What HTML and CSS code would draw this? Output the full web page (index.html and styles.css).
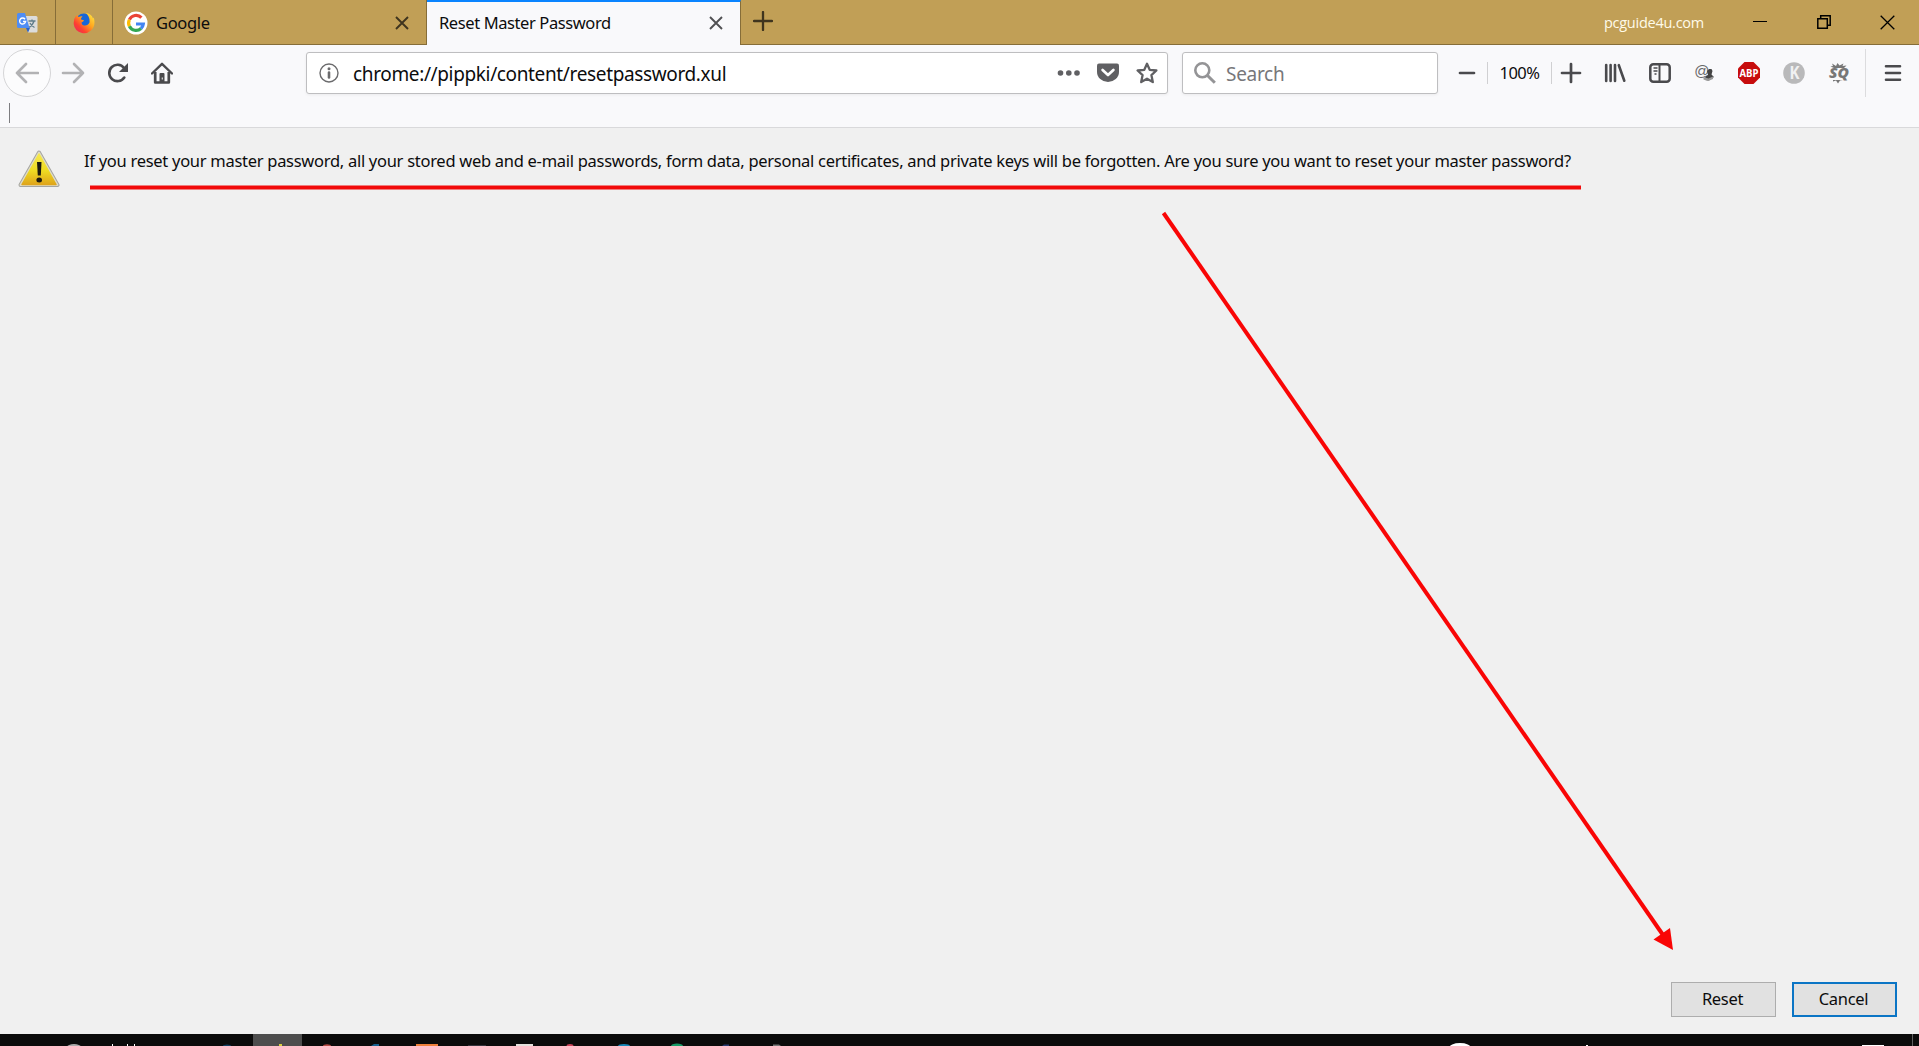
FILE: index.html
```html
<!DOCTYPE html>
<html lang="en">
<head>
<meta charset="utf-8">
<title>Reset Master Password</title>
<link rel="stylesheet" href="styles.css">
</head>
<body>
<div class="window">
  <header class="titlebar">
    <div class="tab pinned">
      <svg width="22" height="22" viewBox="0 0 22 22">
        <path d="M8 4h12q1.500 0 1.500 1.500v13.500q0 1.500-1.500 1.500h-8z" fill="#dcdcdc"/>
        <path d="M12.500 9h7M16 7.500V9m2 0q-1 4-5 6.500M14 11q1.500 3 4.500 4.500" stroke="#607d8b" stroke-width="1.300" fill="none"/>
        <path d="M2.500 1H9l4.500 15H2.500Q1 16 1 14.500v-12Q1 1 2.500 1z" fill="#4f8df5"/>
        <path d="M10 16h4l-2 4.500z" fill="#2a62c9"/>
        <path d="M9 7.200A3 3 0 1 0 9.600 9.500H7" stroke="#fff" stroke-width="1.400" fill="none"/>
      </svg>
    </div>
    <div class="tab pinned">
      <svg width="22" height="22" viewBox="0 0 22 22">
        <defs><linearGradient id="fox" x1="1" y1="0" x2="0" y2="1"><stop offset="0" stop-color="#fff04a"/><stop offset=".4" stop-color="#ffa51e"/><stop offset=".7" stop-color="#ff4030"/><stop offset="1" stop-color="#e8206a"/></linearGradient></defs>
        <circle cx="11" cy="10" r="8.500" fill="#1766d8"/>
        <path d="M2.500 4.500L4 3l1.500 2Q8 4 9.500 4.500 7.500 6 8 7.500l3 .7q-.3 1.600-2.500 2.300Q9 14 12 13.500q3 0 4.500-3Q17 4 12.500 1q6 .5 7.500 5.500l.8-1Q23 14 18 18.500 14 22 9 21 1.500 19 .7 12 .5 7 2.500 4.500z" fill="url(#fox)"/>
      </svg>
    </div>
    <div class="tab google">
      <svg width="24" height="24" viewBox="0 0 24 24">
        <circle cx="12" cy="12" r="11.500" fill="#fff"/>
        <g fill="none" stroke-width="3.200">
          <path d="M17.400 6.600A7.400 7.400 0 0 0 5.400 8.700" stroke="#ea4335"/>
          <path d="M5.400 8.700a7.400 7.400 0 0 0 0 6.600" stroke="#fbbc05"/>
          <path d="M5.400 15.300a7.400 7.400 0 0 0 11.600 2.200" stroke="#34a853"/>
          <path d="M17 17.500a7.400 7.400 0 0 0 2.300-4.500H12" stroke="#4285f4"/>
        </g>
      </svg>
      <span class="tab-label label-google">Google</span>
      <svg class="close" width="14" height="14" viewBox="0 0 14 14"><path d="M1 1l12 12M13 1L1 13" stroke="#3f341e" stroke-width="1.900"/></svg>
    </div>
    <div class="tab active">
      <span class="tab-label label-reset">Reset Master Password</span>
      <svg class="close" width="14" height="14" viewBox="0 0 14 14"><path d="M1 1l12 12M13 1L1 13" stroke="#505052" stroke-width="1.900"/></svg>
    </div>
    <div class="newtab"><svg width="20" height="20" viewBox="0 0 20 20"><path d="M10 1v18M1 10h18" stroke="#3f341e" stroke-width="2.300" stroke-linecap="round"/></svg></div>
    <span class="site">pcguide4u.com</span>
    <div class="controls">
      <svg width="14" height="14" viewBox="0 0 14 14"><path d="M0 6.500h14" stroke="#000"/></svg>
      <svg width="14" height="14" viewBox="0 0 14 14"><path d="M.8 3.700h9.500v9.500H.8zM3.700 3.500V.8h9.500v9.500h-2.700" fill="none" stroke="#000" stroke-width="1.500"/></svg>
      <svg width="15" height="15" viewBox="0 0 15 15"><path d="M.7.700l13.600 13.600M14.300.700L.7 14.300" stroke="#000" stroke-width="1.300"/></svg>
    </div>
  </header>

  <nav class="toolbar">
    <div class="back"><svg width="24" height="22" viewBox="0 0 24 22"><path d="M11 2L2 11l9 9M2 11h21" class="arrow"/></svg></div>
    <div class="btn"><svg width="24" height="22" viewBox="0 0 24 22"><path d="M13 2l9 9-9 9M22 11H2" class="arrow"/></svg></div>
    <div class="btn"><svg width="22" height="22" viewBox="0 0 22 22"><path d="M17.300 15.500A8.200 8.200 0 1 1 17 6" fill="none" stroke="#4a4a4d" stroke-width="2.600" stroke-linecap="round"/><path d="M21 1v8.500q0 .5-.5.500H12z" fill="#4a4a4d"/></svg></div>
    <div class="btn"><svg width="22" height="22" viewBox="0 0 22 22"><path d="M1 11.500L11 1.800l10 9.700" fill="none" stroke="#4a4a4d" stroke-width="2.400" stroke-linecap="round" stroke-linejoin="round"/><path d="M4.200 10v10.500h13.600V10" fill="none" stroke="#4a4a4d" stroke-width="2.700" stroke-linejoin="round"/><path d="M8.500 21v-9q0-1 1-1h3q1 0 1 1v9z" fill="#4a4a4d"/><path d="M11.300 15.500v2" stroke="#ddd" stroke-width="1.200"/></svg></div>

    <div class="field url">
      <svg width="20" height="20" viewBox="0 0 20 20"><circle cx="10" cy="10" r="9" fill="none" stroke="#6b6b6d" stroke-width="1.400"/><circle cx="10" cy="5.800" r="1.500" fill="#6b6b6d"/><path d="M10 9.600v4.800" stroke="#6b6b6d" stroke-width="2.600" stroke-linecap="round"/></svg>
      <span class="url-text">chrome://pippki/content/resetpassword.xul</span>
      <div class="url-actions">
        <svg width="24" height="22" viewBox="0 0 24 22" fill="#606063"><circle cx="4.500" cy="11" r="2.800"/><circle cx="12.800" cy="11" r="2.800"/><circle cx="21" cy="11" r="2.800"/></svg>
        <svg width="22" height="22" viewBox="0 0 22 22"><path d="M2 1.500h18q2 0 2 2V10a11 10 0 0 1-22 0V3.500q0-2 2-2z" fill="#606063"/><path d="M5.600 8l5.400 5 5.400-5" fill="none" stroke="#fff" stroke-width="2.700" stroke-linecap="round" stroke-linejoin="round"/></svg>
        <svg width="22" height="22" viewBox="0 0 22 22"><path d="M11 1.800l2.700 6 6.700.7-5 4.600 1.400 7L11 16.700 5.200 20.100l1.400-7-5-4.600 6.700-.7z" fill="none" stroke="#606063" stroke-width="2.300" stroke-linejoin="round"/></svg>
      </div>
    </div>

    <div class="field search">
      <svg width="24" height="24" viewBox="0 0 24 24"><circle cx="9.300" cy="9.300" r="7" fill="none" stroke="#949496" stroke-width="2.600"/><path d="M14.500 14.500l7.300 7.300" stroke="#949496" stroke-width="3"/></svg>
      <span class="search-text">Search</span>
    </div>

    <div class="zoom-minus"><svg width="18" height="22" viewBox="0 0 18 22"><path d="M2 11h14" stroke="#4a4a4d" stroke-width="2.700" stroke-linecap="round"/></svg></div>
    <div class="zoom-level"><span>100%</span></div>
    <div class="zoom-plus"><svg width="22" height="22" viewBox="0 0 22 22"><path d="M11 2v18M2 11h18" stroke="#4a4a4d" stroke-width="2.700" stroke-linecap="round"/></svg></div>
    <div class="extras">
      <svg width="22" height="22" viewBox="0 0 22 22"><path d="M2.200 3v16M6.600 3v16M11 3v16M14.800 3.200l5.500 15.500" fill="none" stroke="#4a4a4d" stroke-width="2.600" stroke-linecap="round"/></svg>
      <svg width="22" height="22" viewBox="0 0 22 22"><rect x="1.300" y="2.300" width="19.400" height="17.400" rx="3" fill="none" stroke="#4a4a4d" stroke-width="2.500"/><path d="M10.500 3v16" stroke="#4a4a4d" stroke-width="2"/><path d="M4.500 6h4M4.500 9h4M5.500 12h2" stroke="#4a4a4d" stroke-width="1.400"/></svg>
      <svg width="22" height="22" viewBox="0 0 22 22"><text x="0" y="14" font-size="15" class="at">@</text><path d="M11 16l1.500-2.500 1.500-.5-1-4 2-2h2.500l1 2-1 3.500 2.500 2.500-5 3.500-4-.5z" fill="#444"/><path d="M9.500 15l5 1.500L19 14.500v2.500l-5 2-4.500-1.500z" fill="#999"/></svg>
      <svg width="22" height="22" viewBox="0 0 22 22"><path d="M6.500 0h9L22 6.500v9L15.500 22h-9L0 15.500v-9z" fill="#c70d0d"/><text x="11" y="14.900" text-anchor="middle" font-size="11" textLength="19" lengthAdjust="spacingAndGlyphs" class="abp">ABP</text></svg>
      <svg width="22" height="22" viewBox="0 0 22 22"><circle cx="11" cy="11" r="10.800" fill="#b9b9ba"/><text x="11.500" y="17" text-anchor="middle" font-size="17" textLength="10" lengthAdjust="spacingAndGlyphs" class="kay">K</text></svg>
      <svg width="22" height="22" viewBox="0 0 22 22"><path d="M4 1.500l4 2.500 1.500-3 2 2.500L15.500 1.500l-1 2.500 4-.5-2.500 2.500H6L2.500 4.500 5 4z M5 18h10l-3 .5-2 3-2-3-3 1z" fill="#777"/><text x="11" y="16.200" text-anchor="middle" font-size="14.500" textLength="20" lengthAdjust="spacingAndGlyphs" class="sq">SQ</text></svg>
    </div>
    <div class="menu"><svg width="18" height="18" viewBox="0 0 18 18"><path d="M2 2.300h14M2 9h14M2 15.700h14" stroke="#4a4a4d" stroke-width="2.600" stroke-linecap="round"/></svg></div>
  </nav>
  <div class="bookmarks"><i class="divider"></i></div>

  <main class="dialog">
    <div class="message">
      <svg width="42" height="38" viewBox="0 0 42 38">
        <defs><linearGradient id="warn" x1="0" y1="0" x2="0" y2="1"><stop offset="0" stop-color="#f7e94e"/><stop offset=".55" stop-color="#eedb22"/><stop offset="1" stop-color="#dfa51b"/></linearGradient></defs>
        <path d="M21 2.500L39.500 35h-37z" fill="#aaa" stroke="#a5a5a0" stroke-width="4" stroke-linejoin="round"/>
        <path d="M21 2.500L39.500 35h-37z" fill="#aaa" stroke="#dedbc8" stroke-width="2" stroke-linejoin="round"/>
        <path d="M21 4L38 34.500H4z" fill="url(#warn)" stroke="url(#warn)" stroke-width="1.500" stroke-linejoin="round"/>
        <path d="M19 12h4.500l-.7 13.500h-3z" fill="#1c1a10"/><ellipse cx="21.200" cy="30" rx="2.800" ry="2.500" fill="#1c1a10"/>
      </svg>
      <span class="message-text">If you reset your master password, all your stored web and e-mail passwords, form data, personal certificates, and private keys will be forgotten. Are you sure you want to reset your master password?</span>
    </div>
    <div class="actions">
      <button class="button">Reset</button>
      <button class="button default">Cancel</button>
    </div>
  </main>

  <footer class="taskbar">
    <svg width="1919" height="12" viewBox="0 0 1919 12">
      <rect x="253" width="49" height="12" fill="#4d4d4d"/>
      <ellipse cx="74" cy="13" rx="7" ry="3" fill="#aaa"/>
      <path d="M112.500 10v2M127.500 10v2M134.500 10v2" stroke="#fff"/>
      <ellipse cx="227" cy="12" rx="4" ry="1.500" fill="#123e60"/>
      <path d="M279 12v-2h3v2z" fill="#d8d040"/>
      <ellipse cx="327" cy="12" rx="4" ry="1.800" fill="#b54b45"/>
      <path d="M371 12l3-2h5v2z" fill="#17608f"/>
      <path d="M416 10h22v2h-22z" fill="#ee7f3a"/>
      <path d="M468 11h18v1h-18z" fill="#34343c"/>
      <path d="M516 10h17v2h-17z" fill="#e4e0dc"/>
      <ellipse cx="570" cy="12" rx="3.500" ry="2" fill="#c94458"/>
      <ellipse cx="624" cy="12" rx="6" ry="2" fill="#1687b8"/>
      <ellipse cx="677" cy="12" rx="6" ry="2.500" fill="#179a66"/>
      <path d="M722 12l2-1.500h5V12z" fill="#293a70"/>
      <path d="M773 10.500h6l2 1.500h-8z" fill="#777"/>
      <ellipse cx="1460" cy="14" rx="11" ry="5" fill="#fff"/>
      <path d="M1586 11h2v1h-2zM1862 11h22v1h-22z" fill="#fff"/>
      <path d="M1912.500 0v12" stroke="#606060"/>
    </svg>
  </footer>

  <svg class="annotation" width="1919" height="1046" viewBox="0 0 1919 1046">
    <path d="M90 187.500h1491" stroke="#f20a0a" stroke-width="4"/>
    <path d="M1163.500 213L1663 935" stroke="#f90505" stroke-width="4"/>
    <path d="M1673 950l-19.500-10.500 16.500-11.500z" fill="#f90505"/>
  </svg>
</div>
</body>
</html>
```
FILE: styles.css
```css
* { box-sizing: border-box; }
body { margin: 0; overflow: hidden; font-family: "Noto Sans", "Open Sans", sans-serif; color: #0c0c0d; }
svg { display: block; flex: none; }
span { white-space: nowrap; }
.window { position: relative; display: flex; flex-direction: column; width: 1919px; height: 1046px; background: #f9f9fb; }

.titlebar { display: flex; height: 45px; background: #c19f56; box-shadow: inset 0 -1px #866d38; }
.tab { display: flex; align-items: center; height: 45px; border-right: 1px solid #866d38; border-bottom: 1px solid #866d38; }
.pinned { width: 57px; padding-top: 1px; justify-content: center; }
.pinned:first-child { width: 56px; padding-right: 1px; }
.google { width: 314px; padding: 2px 17px 0 11px; }
.google .tab-label { margin-left: 8px; }
.active { width: 314px; padding: 0 17px 1px 12px; background: #f9f9fb; border-top: 2px solid #0a84ff; border-bottom: 0; }
.tab-label { font-size: 16.500px; line-height: 24px; }
.label-google { letter-spacing: -.35px; }
.label-reset { letter-spacing: -.4px; }
.close { margin-left: auto; }
.newtab { margin: 11px 0 0 12px; }
.site { margin-left: auto; font: 14.500px/46px "Open Sans", sans-serif; color: #fffbe9; letter-spacing: -.25px; }
.controls { display: flex; align-items: center; gap: 50px; padding: 0 24px 1px 49px; }
.controls svg:last-child { margin-left: -1px; }

.toolbar { display: flex; align-items: center; height: 56px; }
.back { display: flex; align-items: center; justify-content: center; width: 48px; height: 48px; margin-left: 3px; border: 1px solid #d5d5d7; border-radius: 50%; background: #fcfcfd; }
.arrow { fill: none; stroke: #b2b2b4; stroke-width: 2.600; stroke-linecap: round; stroke-linejoin: round; }
.btn { display: flex; justify-content: center; width: 44.500px; }
.field { display: flex; align-items: center; height: 42px; background: #fff; border: 1px solid #bebec0; border-radius: 3px; box-shadow: 0 1px 3px rgba(0,0,0,.06); }
.url { width: 862px; margin-left: 121.500px; padding: 0 9px 0 12px; }
.url-text { margin-left: 14px; padding-top: 2px; font-size: 19px; letter-spacing: -.36px; }
.url-actions { display: flex; gap: 17px; margin-left: auto; }
.search { width: 256px; margin-left: 14px; padding-left: 10px; }
.search-text { margin-left: 9px; padding-top: 2px; font-size: 19px; letter-spacing: -.3px; color: #77777a; }
.zoom-minus { display: flex; justify-content: center; width: 40px; margin-left: 9px; }
.zoom-level { display: flex; align-items: center; justify-content: center; width: 65px; height: 22px; padding-bottom: 1px; border: solid #d0d0d2; border-width: 0 1px; font-size: 16.500px; letter-spacing: -.5px; }
.zoom-plus { display: flex; justify-content: center; width: 38px; }
.extras { display: flex; gap: 22.700px; margin-left: 14.300px; }
.at { font-family: "Liberation Sans", sans-serif; font-style: italic; fill: #68686a; }
.abp { font-family: "Open Sans", sans-serif; font-weight: 700; fill: #fff; }
.kay { font-family: "Open Sans", sans-serif; font-weight: 700; fill: #f1f1f2; }
.sq { font-family: "Open Sans", sans-serif; font-weight: 800; font-style: italic; fill: #777; }
.menu { display: flex; align-items: center; justify-content: center; width: 54px; height: 48px; margin-left: auto; border-left: 1px solid #dcdcde; }
.bookmarks { height: 27px; padding: 2px 0 0 9px; border-bottom: 1px solid #d9d9db; }
.divider { display: block; width: 1px; height: 20px; background: #7d7d80; }

.dialog { flex: 1; display: flex; flex-direction: column; justify-content: space-between; padding: 22px 22px 17px 18px; background: #f0f0f0; }
.message { display: flex; align-items: flex-start; gap: 24px; }
.message-text { font-size: 16.500px; line-height: 24px; margin-top: -1px; letter-spacing: -.283px; }
.actions { display: flex; justify-content: flex-end; gap: 16px; }
.button { width: 105px; height: 35px; padding: 0 2px 2px 0; border: 1px solid #adadad; background: #e1e1e1; color: #0c0c0d; font: 16.500px "Noto Sans", sans-serif; letter-spacing: -.3px; }
.default { border: 2px solid #0b75c5; }
.taskbar { height: 12px; background: #0b0b0b; overflow: hidden; }
.annotation { position: absolute; left: 0; top: 0; pointer-events: none; }
```
